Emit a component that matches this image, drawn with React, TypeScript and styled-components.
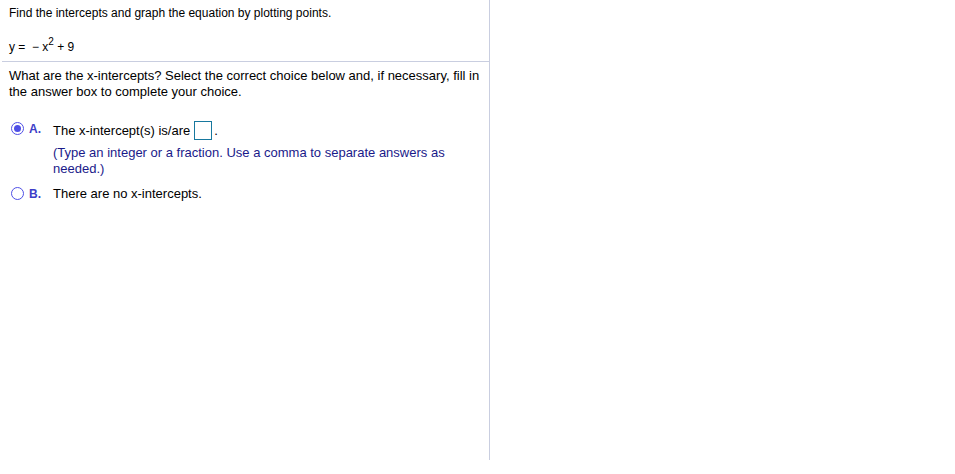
import React from "react";
import styled, { createGlobalStyle } from "styled-components";

const GlobalStyle = createGlobalStyle`
  html, body {
    margin: 0;
    padding: 0;
    background: #fff;
  }
  body {
    font-family: "Liberation Sans", Arial, sans-serif;
    font-size: 12px;
    color: #000;
  }
`;

const Page = styled.div`
  width: 955px;
  height: 474px;
  display: flex;
`;

const Panel = styled.div`
  width: 490px;
  height: 460px;
  border-right: 1px solid #c9cee0;
  box-sizing: border-box;
  display: flex;
  flex-direction: column;
`;

const Section = styled.div`
  padding: 5px 8px 0 9px;
  line-height: 16px;
`;

const Prompt = styled.div`
  margin-bottom: 18px;
`;

const Equation = styled.div`
  margin-bottom: 6px;
  line-height: 16px;
  sup {
    font-size: 10px;
    line-height: 0;
    vertical-align: 6px;
  }
`;

const Rule = styled.hr`
  margin: 0 0 0 2px;
  width: 488px;
  border: 0;
  border-top: 1px solid #c9cee0;
`;

const Question = styled.div`
  padding: 6px 8px 0 9px;
  font-size: 13px;
  line-height: 16px;
`;

const Choices = styled.div`
  padding: 21px 8px 0 11px;
  display: flex;
  flex-direction: column;
  gap: 9px;
  font-size: 13px;
`;

const Choice = styled.div`
  display: flex;
  align-items: flex-start;
  line-height: 16px;
`;

const Radio = styled.span<{ checked?: boolean }>`
  width: 11px;
  height: 11px;
  margin-top: 1px;
  border: 1.5px solid #4f4fe6;
  border-radius: 50%;
  flex-shrink: 0;
  display: flex;
  align-items: center;
  justify-content: center;
  &::after {
    content: "";
    width: 7px;
    height: 7px;
    border-radius: 50%;
    background: ${(p) => (p.checked ? "#4f4fe6" : "transparent")};
  }
`;

const Letter = styled.span`
  font-weight: bold;
  font-size: 12px;
  color: #3d3dc8;
  width: 24px;
  margin-left: 5px;
  flex-shrink: 0;
`;

const Body = styled.div`
  display: flex;
  flex-direction: column;
`;

const AnswerLine = styled.div`
  display: flex;
  align-items: center;
`;

const AnswerBox = styled.span`
  display: inline-block;
  width: 16px;
  height: 17px;
  border: 1.5px solid #17789e;
  margin: 0 2px 0 4px;
`;

const Hint = styled.div`
  color: #1a1a8a;
  margin-top: 5px;
  width: 400px;
`;

export default function App() {
  return (
    <>
      <GlobalStyle />
      <Page>
        <Panel>
          <Section>
            <Prompt>Find the intercepts and graph the equation by plotting points.</Prompt>
            <Equation>
              y = &nbsp;− x<sup>2</sup> + 9
            </Equation>
          </Section>
          <Rule />
          <Question>
            What are the x-intercepts? Select the correct choice below and, if necessary, fill in
            the answer box to complete your choice.
          </Question>
          <Choices>
            <Choice>
              <Radio checked />
              <Letter>A.</Letter>
              <Body>
                <AnswerLine>
                  The x-intercept(s) is/are
                  <AnswerBox />.
                </AnswerLine>
                <Hint>
                  (Type an integer or a fraction. Use a comma to separate answers as needed.)
                </Hint>
              </Body>
            </Choice>
            <Choice>
              <Radio />
              <Letter>B.</Letter>
              <Body>There are no x-intercepts.</Body>
            </Choice>
          </Choices>
        </Panel>
      </Page>
    </>
  );
}
